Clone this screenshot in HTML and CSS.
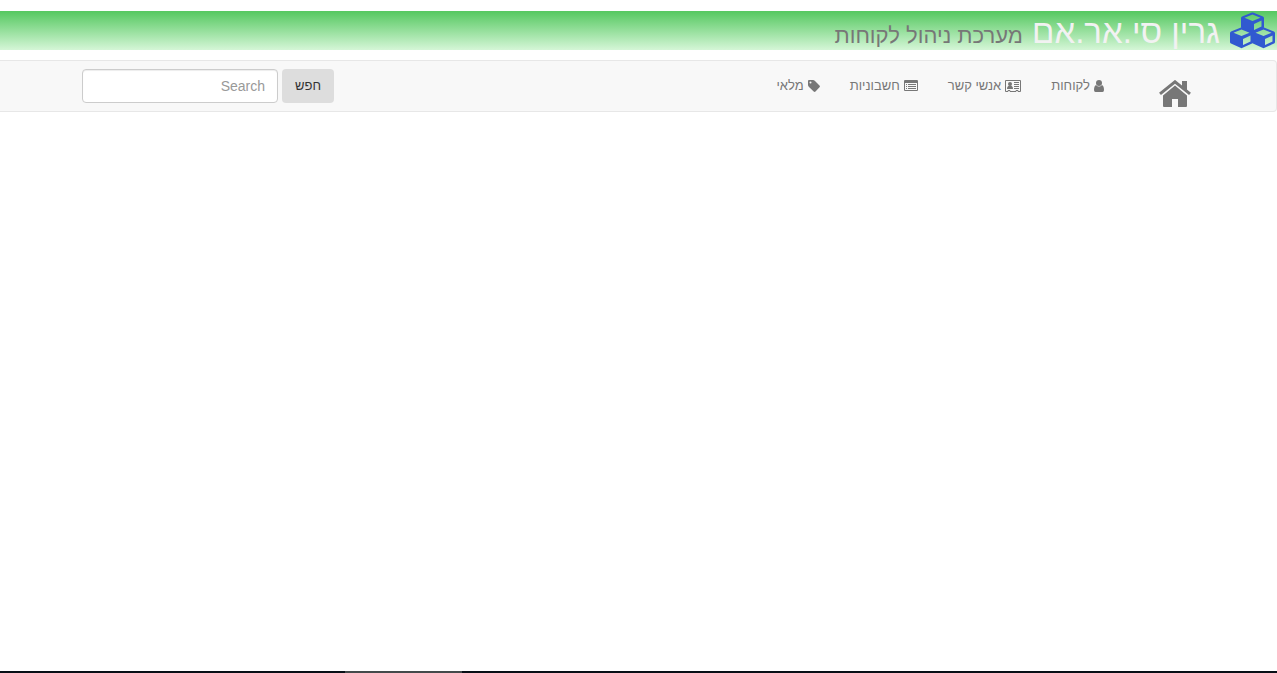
FILE: index.html
```html
<!DOCTYPE html>
<html lang="he" dir="rtl">
<head>
<meta charset="utf-8">
<title>גרין סי.אר.אם</title>
<link rel="stylesheet" href="styles.css">
</head>
<body>
<header class="banner">
  <svg class="logo" viewBox="0 0 45 38" aria-hidden="true">
    <g fill="#3159d0">
      <path id="cube" fill-rule="evenodd" d="M22 .5 Q22.500 .3 23 .5 L33 4.500 Q34 5 34 6 V15 Q34 16 33 16.500 L23 21 Q22.500 21.300 22 21 L12 16.500 Q11 16 11 15 V6 Q11 5 12 4.500 Z M22.500 2.500 L14.500 5.700 L22.500 9 L30.500 5.700 Z M24 12 V18 L31.500 14.500 V8.500 Z"/>
      <use href="#cube" x="-11" y="15"/>
      <use href="#cube" x="11" y="15"/>
    </g>
  </svg>
  <h1 class="title">גרין סי.אר.אם <small class="subtitle">מערכת ניהול לקוחות</small></h1>
</header>
<nav class="navbar">
  <div class="container">
    <a class="home" href="#" aria-label="בית">
      <svg viewBox="0 0 32 28" aria-hidden="true"><path d="M16 5.500 L28 15.500 V26 Q28 27 27 27 H19 V19 H13 V27 H5 Q4 27 4 26 V15.500 Z"/><path d="M1 13.800 L16 1.800 L31 13.800" fill="none" stroke="currentColor" stroke-width="3"/><path d="M23 1 H28 V12 L23 8 Z"/></svg>
    </a>
    <ul class="menu">
      <li><a href="#"><svg class="icon user" viewBox="0 0 10 12" aria-hidden="true"><circle cx="5" cy="3" r="3"/><path d="M2 5 Q5 8 8 5 Q10 6 10 10 Q10 12 8.500 12 H1.500 Q0 12 0 10 Q0 6 2 5"/></svg><span>לקוחות</span></a></li>
      <li><a href="#"><svg class="icon card" viewBox="0 0 16 12" aria-hidden="true"><path d="M.5 .5 H15.500 V11.500 H13 V10.500 H11 V11.500 H5 V10.500 H3 V11.500 H.5 Z" fill="none" stroke="currentColor"/><circle cx="5" cy="4" r="2"/><path d="M2 9 Q2 5.500 5 5.500 T8 9 Z M9 2 H14 V3 H9 Z M9 4 H14 V5 H9 Z M9 6 H14 V7 H9 Z M9 8 H14 V9 H9 Z"/></svg><span>אנשי קשר</span></a></li>
      <li><a href="#"><svg class="icon list" viewBox="0 0 14 12" aria-hidden="true"><path fill-rule="evenodd" d="M1 0 H13 Q14 0 14 1 V10 Q14 11 13 11 H1 Q0 11 0 10 V1 Q0 0 1 0 M1 3 V10 H13 V3 Z"/><path d="M2 4 H3 V5 H2 Z M4 4 H12 V5 H4 Z M2 6 H3 V7 H2 Z M4 6 H12 V7 H4 Z M2 8 H3 V9 H2 Z M4 8 H12 V9 H4 Z"/></svg><span>חשבוניות</span></a></li>
      <li><a href="#"><svg class="icon tag" viewBox="0 0 12 12" aria-hidden="true"><path fill-rule="evenodd" d="M0 1 Q0 0 1 0 H5 Q6 0 7 1 L11.500 5.500 Q12.300 6.500 11.500 7.300 L7.500 11.500 Q6.700 12.300 5.700 11.500 L1 7 Q0 6 0 5 Z M2.500 1.500 A1 1 0 1 0 2.500 3.500 A1 1 0 1 0 2.500 1.500"/></svg><span>מלאי</span></a></li>
    </ul>
    <form class="search">
      <button type="button">חפש</button>
      <input type="text" placeholder="Search" aria-label="Search">
    </form>
  </div>
</nav>
<footer class="bottom-bar"><span></span></footer>
</body>
</html>
```
FILE: styles.css
```css
* { box-sizing: border-box; }
body {
  margin: 0;
  min-height: 100vh;
  display: flex;
  flex-direction: column;
  background: #fff;
  color: #333;
  font: 14px/20px "Liberation Sans", sans-serif;
}
.banner {
  display: flex;
  align-items: center;
  gap: 10px;
  height: 39px;
  margin: 11px 0 10px;
  padding-right: 2px;
  background: linear-gradient(#55c860, #d5f6d7);
}
.logo { width: 45px; height: 38px; }
.title {
  margin: 0;
  padding-top: 6px;
  color: #f2f2f2;
  font-size: 33px;
  font-weight: 400;
  line-height: 37px;
}
.subtitle { color: #777; font-size: 22px; }
.navbar {
  border: 1px solid #e7e7e7;
  border-left: 0;
  border-radius: 0 4px 4px 0;
  background: #f8f8f8;
}
.container {
  display: flex;
  align-items: center;
  min-height: 50px;
  padding: 0 85px 0 82px;
}
.home { color: #777; margin-top: 16px; }
.home svg { display: block; width: 32px; height: 28px; fill: currentColor; }
.menu { display: flex; margin: 0; padding: 0 40px 0 0; list-style: none; }
.menu a {
  display: flex;
  align-items: center;
  gap: 4px;
  padding: 15px;
  color: #777;
  font-size: 13px;
  text-decoration: none;
  white-space: nowrap;
}
.icon { height: 12px; fill: currentColor; }
.user { width: 10px; }
.card { width: 16px; }
.list { width: 14px; }
.tag { width: 12px; }
.search { display: flex; gap: 4px; margin-right: auto; }
.search button, .search input { height: 34px; border-radius: 4px; }
.search button {
  width: 52px;
  padding: 0;
  border: 0;
  background: #ddd;
  color: #333;
  font: 13px/20px "Liberation Sans", sans-serif;
}
.search input {
  width: 196px;
  padding: 6px 12px;
  border: 1px solid #ccc;
  box-shadow: inset 0 1px 1px rgba(0, 0, 0, .075);
  font: 14px/20px "Liberation Sans", sans-serif;
}
.search input::placeholder { color: #999; }
.bottom-bar { height: 2px; margin-top: auto; padding-left: 27%; background: #080f16; direction: ltr; }
.bottom-bar span { display: block; width: 117px; height: 2px; background: #444a4b; }
```
